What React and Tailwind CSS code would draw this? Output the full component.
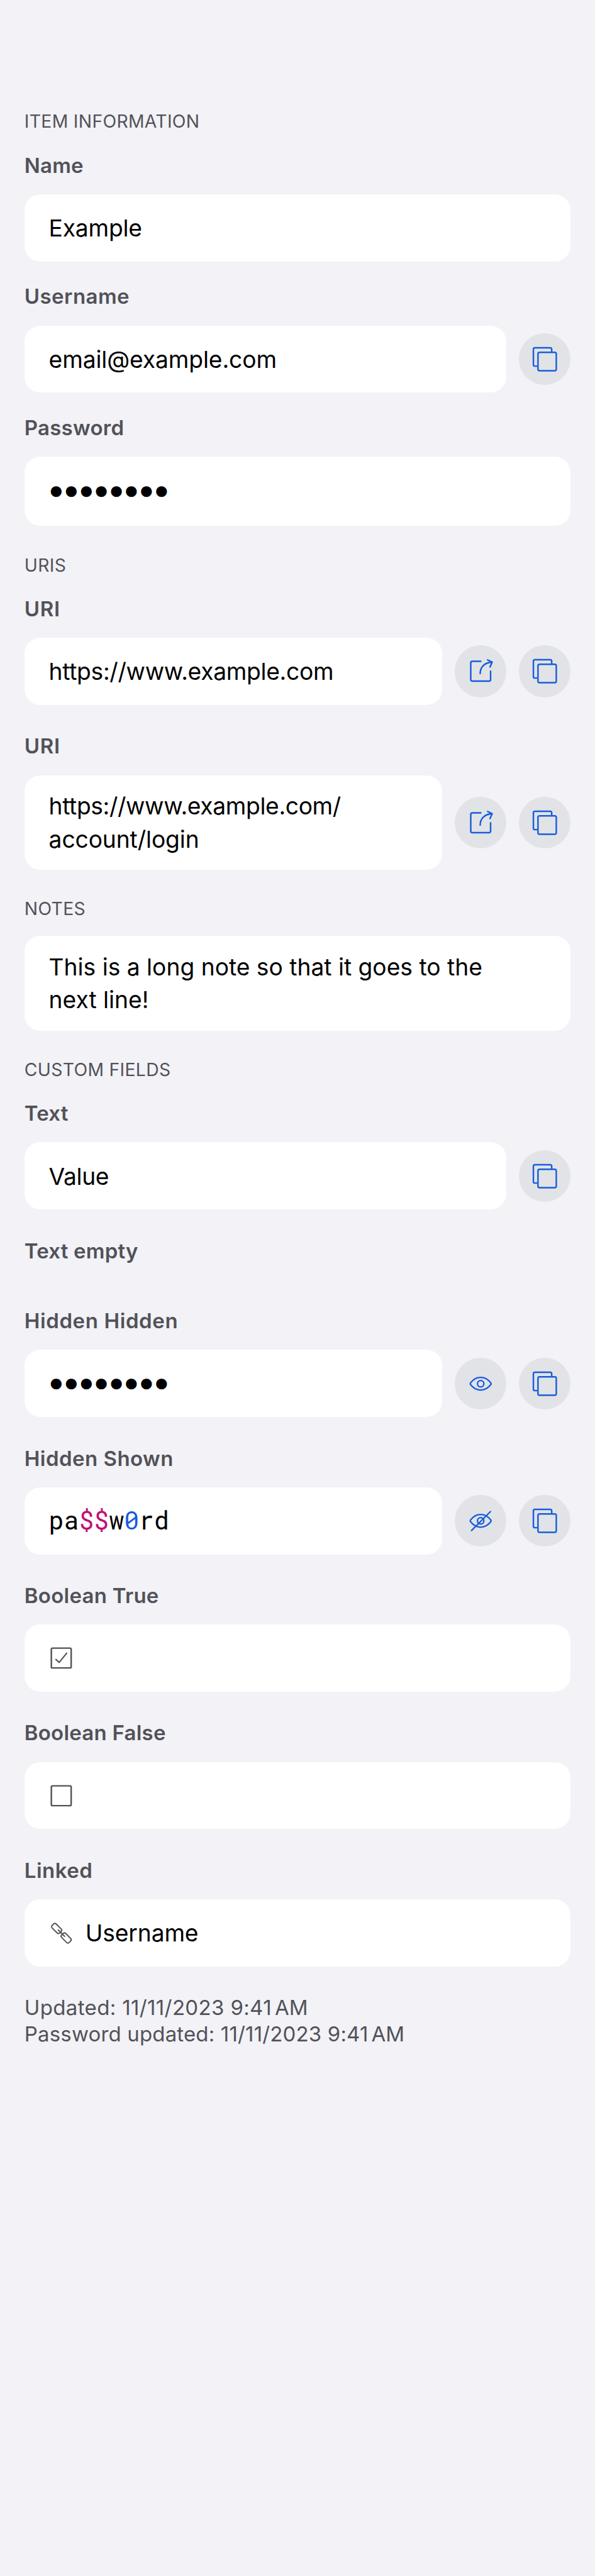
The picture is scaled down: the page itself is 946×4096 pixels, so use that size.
import React from "react";

function IconButton({ label, children }) {
  return (
    <button type="button" aria-label={label} className="size-[82.47px] shrink-0 rounded-full bg-[#e2e3e7] text-[#175ddc]">
      <svg
        viewBox="0 0 102 102"
        className="size-full"
        fill="none"
        stroke="currentColor"
        strokeWidth="3"
        strokeLinecap="round"
        strokeLinejoin="round"
      >
        {children}
      </svg>
    </button>
  );
}

function CopyButton() {
  return (
    <IconButton label="Copy">
      <path strokeLinecap="butt" d="M64.5 36V31.5a3 3 0 0 0-3-3h-30a3 3 0 0 0-3 3v30a3 3 0 0 0 3 3H36" />
      <rect x="37.5" y="37.5" width="36" height="36" rx="3" />
    </IconButton>
  );
}

function OpenButton() {
  return (
    <IconButton label="Open">
      <path d="M51.3 31.5H34.5a3 3 0 0 0-3 3v33a3 3 0 0 0 3 3h33a3 3 0 0 0 3-3V51" />
      <path d="M50 55.6C50 43 58.5 33.9 73 33.3" />
      <path d="M64.6 28.8 73.6 33.2 69.4 42.8" />
    </IconButton>
  );
}

function EyeShapes() {
  return (
    <>
      <path
        strokeWidth="2.8"
        d="M31 52.6a2.8 2.8 0 0 1 0-3.2C36.2 42.6 43.2 38.6 51 38.6s14.8 4 20 10.8a2.8 2.8 0 0 1 0 3.2C65.8 59.4 58.8 63.4 51 63.4s-14.8-4-20-10.8Z"
      />
      <circle cx="51" cy="51" r="6.3" strokeWidth="2.8" />
    </>
  );
}

function ShowButton() {
  return (
    <IconButton label="Show">
      <EyeShapes />
    </IconButton>
  );
}

function HideButton() {
  return (
    <IconButton label="Hide">
      <EyeShapes />
      <path strokeWidth="2.8" d="M70.2 32.8 33 70" />
    </IconButton>
  );
}

function GlyphIcon({ children }) {
  return (
    <svg
      viewBox="0 0 48 48"
      className="size-[38.81px] shrink-0 text-[#525258]"
      fill="none"
      stroke="currentColor"
      strokeWidth="3"
      strokeLinecap="round"
      strokeLinejoin="round"
    >
      {children}
    </svg>
  );
}

function Heading({ className = "", children }) {
  return (
    <h2 className={`h-[35.98px] text-[28.3px] leading-[35.98px] tracking-[0.33px] whitespace-nowrap uppercase ${className}`}>
      {children}
    </h2>
  );
}

function Field({ label, tracking, className = "mt-[45.3px]", buttons, children }) {
  return (
    <div className={className}>
      <div className={`h-[41.64px] text-[33px] leading-[41.64px] font-semibold whitespace-nowrap ${tracking}`}>{label}</div>
      {children && (
        <div className="mt-[24.69px] flex items-center gap-[19.4px]">
          {children}
          {buttons}
        </div>
      )}
    </div>
  );
}

function Card({ className = "h-[106.77px] pt-[2px]", children }) {
  return (
    <div
      className={`flex min-w-0 flex-1 items-center rounded-[25px] bg-white px-[38.81px] text-[37.2px] leading-[52.6px] whitespace-nowrap text-black ${className}`}
    >
      {children}
    </div>
  );
}

function Dots() {
  return <span className="font-['Liberation_Mono',monospace] text-[39.85px]">●●●●●●●●</span>;
}

export default function App() {
  return (
    <main className="flex min-h-[4096px] w-full flex-col bg-[#f2f2f7] px-[38.81px] pt-[176.33px] font-[Inter,sans-serif] text-[#525258]">
      <Heading>Item information</Heading>
      <Field label="Name" tracking="tracking-[0.2px]" className="mt-[30.35px]">
        <Card>
          <span className="tracking-[-0.2px]">Example</span>
        </Card>
      </Field>
      <Field label="Username" tracking="tracking-[0.44px]" className="mt-[35.59px]" buttons={<CopyButton />}>
        <Card>
          <span className="tracking-[-0.1px]">email@example.com</span>
        </Card>
      </Field>
      <Field label="Password" tracking="tracking-[0.25px]" className="mt-[35.59px]">
        <Card className="h-[110px] pt-[4px]">
          <Dots />
        </Card>
      </Field>

      <Heading className="mt-[45.3px]">URIs</Heading>
      <Field
        label="URI"
        tracking="tracking-[0.7px]"
        className="mt-[30.35px]"
        buttons={
          <>
            <OpenButton />
            <CopyButton />
          </>
        }
      >
        <Card>
          <span className="tracking-[-0.3px]">https://www.example.com</span>
        </Card>
      </Field>
      <Field
        label="URI"
        tracking="tracking-[0.7px]"
        buttons={
          <>
            <OpenButton />
            <CopyButton />
          </>
        }
      >
        <Card className="h-[150.45px] pt-[2px]">
          <p>
            <span className="tracking-[-0.36px]">https://www.example.com/</span>
            <br />
            <span className="tracking-[-0.1px]">account/login</span>
          </p>
        </Card>
      </Field>

      <Heading className="mt-[45.3px]">Notes</Heading>
      <div className="mt-[23.87px] flex">
        <Card className="h-[150.45px] pt-[2px]">
          <p>
            This is a long note so that it goes to the
            <br />
            next line!
          </p>
        </Card>
      </div>

      <Heading className="mt-[45.3px]">Custom fields</Heading>
      <Field label="Text" tracking="tracking-[0.2px]" className="mt-[30.35px]" buttons={<CopyButton />}>
        <Card>
          <span className="tracking-[-0.35px]">Value</span>
        </Card>
      </Field>
      <Field label="Text empty" tracking="tracking-[0.2px]" />
      <Field
        label="Hidden Hidden"
        tracking="tracking-[0.6px]"
        className="mt-[69.98px]"
        buttons={
          <>
            <ShowButton />
            <CopyButton />
          </>
        }
      >
        <Card className="h-[106.77px] pt-[4px]">
          <Dots />
        </Card>
      </Field>
      <Field
        label="Hidden Shown"
        tracking="tracking-[0.46px]"
        buttons={
          <>
            <HideButton />
            <CopyButton />
          </>
        }
      >
        <Card className="h-[106.77px] pb-[2px]">
          <span className="font-['Roboto_Mono','Liberation_Mono',monospace] text-[39.85px]">
            pa<span className="text-[#c01176]">$$</span>w<span className="text-[#175ddc]">0</span>rd
          </span>
        </Card>
      </Field>
      <Field label="Boolean True" tracking="tracking-[0.27px]">
        <Card className="h-[106.77px]">
          <GlyphIcon>
            <rect x="4.5" y="4.5" width="39" height="39" rx="2.5" />
            <path strokeWidth="2.6" d="M13.4 26.8 20 32.6 34.6 14.4" />
          </GlyphIcon>
        </Card>
      </Field>
      <Field label="Boolean False" tracking="tracking-[0.23px]">
        <Card className="h-[106.77px]">
          <GlyphIcon>
            <rect x="4.5" y="4.5" width="39" height="39" rx="2.5" />
          </GlyphIcon>
        </Card>
      </Field>
      <Field label="Linked" tracking="tracking-[0.5px]">
        <Card className="h-[106.77px] gap-[19.4px]">
          <GlyphIcon>
            <g strokeWidth="2.4" transform="rotate(45 24.3 24.6)">
              <rect x="0.6" y="19" width="21" height="11.2" rx="3.6" />
              <rect x="27" y="19" width="21" height="11.2" rx="3.6" />
              <path d="M15.4 24.6h17.8" />
            </g>
          </GlyphIcon>
          <span className="pt-[2px] tracking-[-0.13px]">Username</span>
        </Card>
      </Field>

      <div className="mt-[45.6px] text-[33px] leading-[41.25px] whitespace-nowrap">
        <p className="tracking-[0.36px]">
          Updated: 11/11/2023 9:41<span className="ml-[5px] tracking-normal">AM</span>
        </p>
        <p className="tracking-[0.16px]">
          Password updated: 11/11/2023 9:41<span className="ml-[5px] tracking-normal">AM</span>
        </p>
      </div>
    </main>
  );
}
